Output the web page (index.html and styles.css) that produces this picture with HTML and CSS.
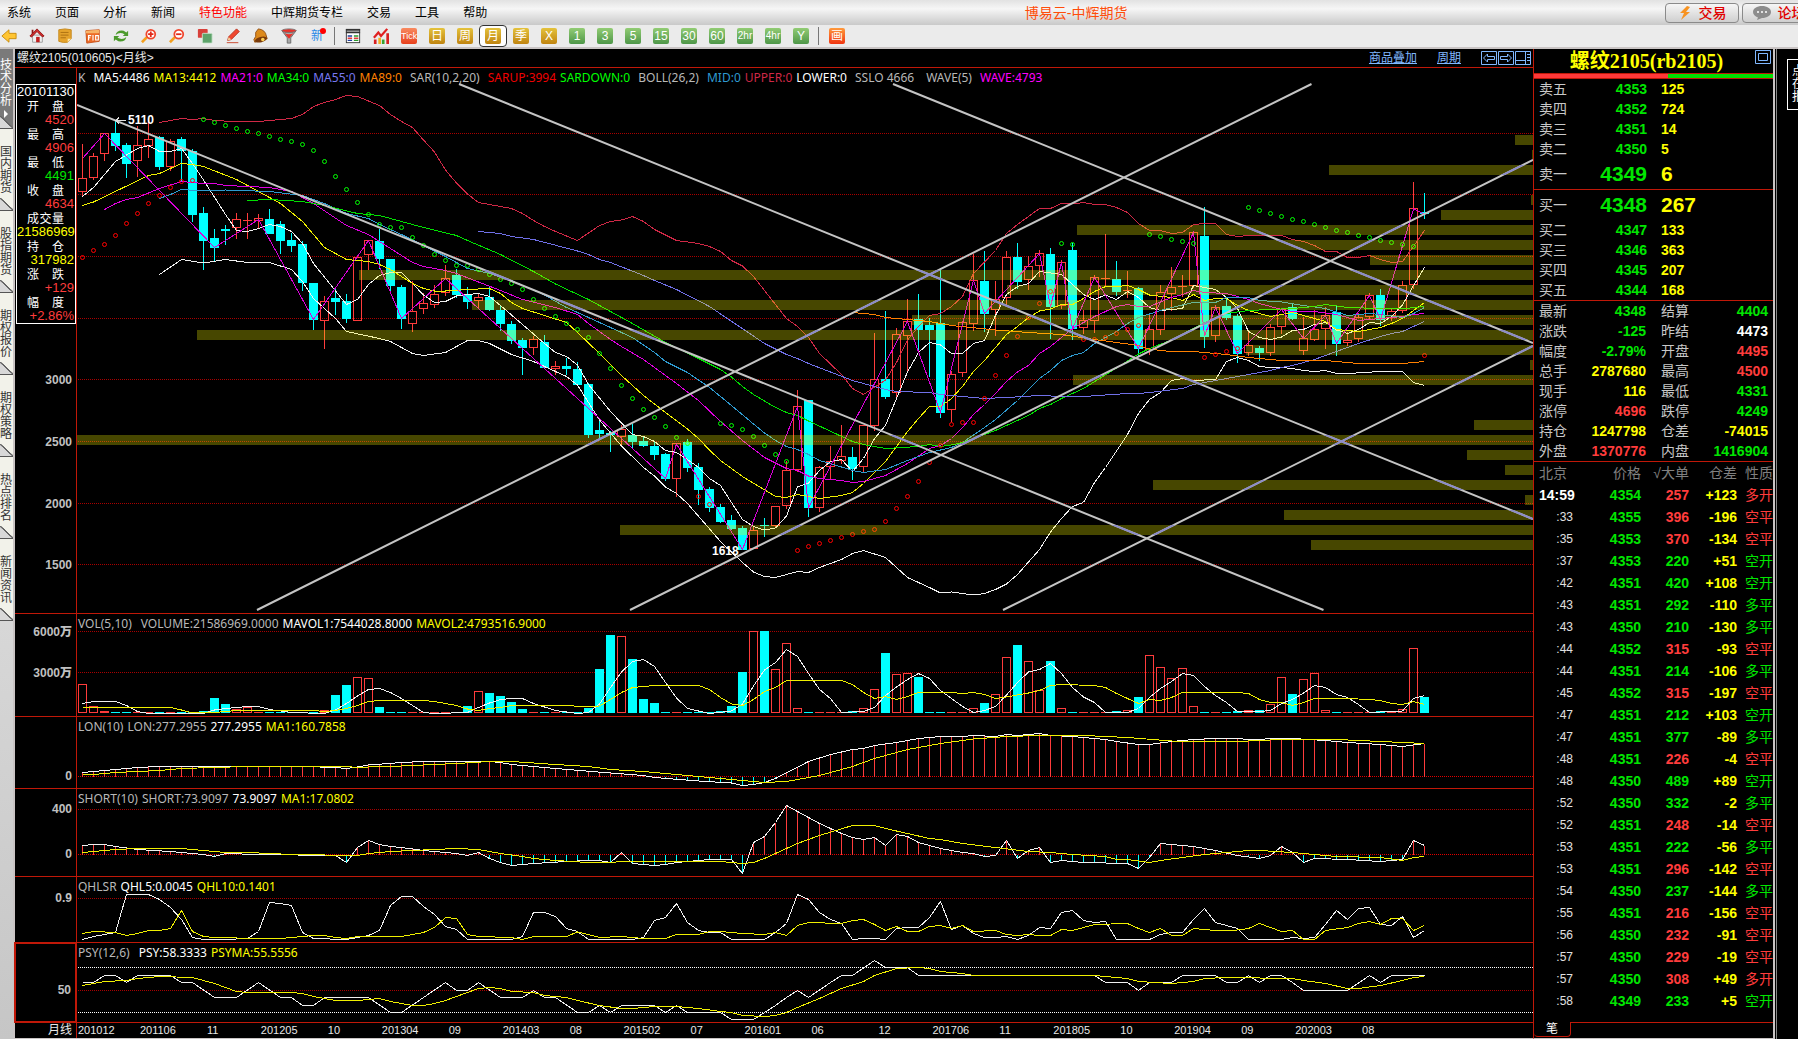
FILE: index.html
```html
<!DOCTYPE html>
<html lang="zh-CN">
<head>
<meta charset="utf-8">
<title>博易云-中辉期货</title>
<link rel="stylesheet" href="styles.css">
</head>
<body>
<div class="app">
  <header class="menubar">
    <nav class="menu">
      <a href="#">系统</a><a href="#">页面</a><a href="#">分析</a><a href="#">新闻</a><a href="#" class="hot">特色功能</a><a href="#">中辉期货专栏</a><a href="#">交易</a><a href="#">工具</a><a href="#">帮助</a>
    </nav>
    <h1 class="brand">博易云-中辉期货</h1>
    <div class="actions">
      <button class="action"><svg width="14" height="16" viewBox="0 0 14 16"><path d="M9 1 2 8h4l-3 7 9-8H8l4-5z" fill="#f79321"/></svg>交易</button>
      <button class="action"><svg width="18" height="14" viewBox="0 0 18 14"><path d="M9 0c5 0 9 2.500 9 6s-4 6-9 6l-5 2 1-2.500C2 10.500 0 8.500 0 6c0-3.500 4-6 9-6z" fill="#8c8c8c"/><circle cx="5" cy="6" r="1" fill="#fff"/><circle cx="9" cy="6" r="1" fill="#fff"/><circle cx="13" cy="6" r="1" fill="#fff"/></svg>论坛</button>
    </div>
  </header>

  <div class="toolbar">
    <button class="tool" aria-label="后退"><svg class="ico" viewBox="0 0 18 18"><path d="M1 9l8-7v4h8v6H9v4z" fill="#ffc533" stroke="#c78a0a"/></svg></button>
    <button class="tool" aria-label="主页"><svg class="ico" viewBox="0 0 18 18"><path d="M4 8h11v8H4z" fill="#f0f0f0" stroke="#999"/><path d="M1 9 9 1l8 8-2 1-6-6-6 6z" fill="#d22a2a" stroke="#8e1515"/><path d="M3 2h2v3L3 7z" fill="#8e1515"/><path d="M8 10h4v6H8z" fill="#c02020"/></svg></button>
    <button class="tool" aria-label="公告"><svg class="ico" viewBox="0 0 18 18"><path d="M2 2q7-2 14 0v10l-4 4q-5 1-10-1z" fill="#e5a32c" stroke="#c4861a"/><path d="M4 5h9M4 8h9M4 11h6" stroke="#a86c10"/><path d="M16 12l-4 4v-4z" fill="#fbe2a4"/></svg></button>
    <button class="tool" aria-label="基本资料"><svg class="ico" viewBox="0 0 18 18"><path d="M1 3l15-1v13l-14 2z" fill="#ed6a25" stroke="#c44a12"/><path d="M1 3l15-1v4H1z" fill="#f7b469"/><path d="M4 8v6M4 8.500h3M4 11h2M9 8v6M12 8.500h3v5h-3z" fill="none" stroke="#fff" stroke-width="1.300"/></svg></button>
    <button class="tool" aria-label="刷新"><svg class="ico" viewBox="0 0 18 18"><path d="M3 8q1-6 9-5l3 2 2-2v6h-6l2-2Q7 4 3 8zM15 10q-1 6-9 5l-3-2-2 2V9h6l-2 2q6 3 10-1z" fill="#4c9a2c"/></svg></button>
    <button class="tool" aria-label="放大"><svg class="ico" viewBox="0 0 18 18"><path d="M7 10l-6 6" stroke="#f4a020" stroke-width="3"/><circle cx="11" cy="7" r="5" fill="#fff" stroke="#f0452c" stroke-width="2"/><path d="M8 7h6M11 4v6" stroke="#e02818" stroke-width="2"/></svg></button>
    <button class="tool" aria-label="缩小"><svg class="ico" viewBox="0 0 18 18"><path d="M7 10l-6 6" stroke="#f4a020" stroke-width="3"/><circle cx="11" cy="7" r="5" fill="#fff" stroke="#f0452c" stroke-width="2"/><path d="M8 7h6" stroke="#e02818" stroke-width="2"/></svg></button>
    <button class="tool" aria-label="叠加"><svg class="ico" viewBox="0 0 18 18"><rect x="1" y="1" width="11" height="10" rx="1" fill="#d8403a"/><rect x="6" y="6" width="11" height="11" rx="1" fill="#5da36a" stroke="#cfe6d2"/></svg></button>
    <button class="tool" aria-label="画线"><svg class="ico" viewBox="0 0 18 18"><path d="M13 1l3 3-9 9-4 1 1-4z" fill="#f0472f" stroke="#b52a18"/><path d="M4 10l3 3-4 1z" fill="#f4cf9a"/><path d="M2 16.500h13" stroke="#c63a20" stroke-width="1"/></svg></button>
    <button class="tool" aria-label="预警"><svg class="ico" viewBox="0 0 18 18"><path d="M6 1q8 1 9 8l1 3L2 16 1 13q3-3 2-8z" fill="#dd8a1c" stroke="#8e4a0c"/><ellipse cx="9" cy="13" rx="7" ry="3" transform="rotate(-14 9 13)" fill="#7a3a0a"/><circle cx="11" cy="13" r="2" fill="#ffd35a"/></svg></button>
    <button class="tool" aria-label="筛选"><svg class="ico" viewBox="0 0 18 18"><path d="M1 3q8 4 16 0l-6 8v6H7v-6z" fill="#a8a8a8" stroke="#666"/><ellipse cx="9" cy="3" rx="8" ry="2" fill="#e83028" stroke="#777"/><path d="M4 6q5 2 10 0l-5 6z" fill="#e83028"/></svg></button>
    <button class="tool"><span class="fresh">新</span></button>
    <i class="sep"></i>
    <button class="tool" aria-label="报价"><svg class="ico" viewBox="0 0 18 18"><rect x="1.500" y="1.500" width="15" height="15" fill="#fff" stroke="#333"/><path d="M1 1h16v2H1zM1 4h16v2H1z" fill="#333"/><path d="M3 9h5M3 14h5" stroke="#1c3c9c" stroke-width="1.500"/><path d="M3 11.500h5" stroke="#e02020" stroke-width="1.500"/><path d="M10 9h5M10 14h5" stroke="#2a9a2a" stroke-width="1.500"/><path d="M10 11.500h5" stroke="#e02020" stroke-width="1.500"/></svg></button>
    <button class="tool" aria-label="分时"><svg class="ico" viewBox="0 0 18 18"><path d="M1 13h3v5H1zM15 6h3v12h-3z" fill="#d82020"/><path d="M6 11h3v7H6z" fill="#f0b020"/><path d="M10 13h3v5h-3z" fill="#38a030"/><path d="M1 11l5-6 3 4 7-8" fill="none" stroke="#e02020" stroke-width="2.500"/></svg></button>
    <button class="tool"><span class="key tick">Tick</span></button>
    <button class="tool"><span class="key gold">日</span></button>
    <button class="tool"><span class="key gold">周</span></button>
    <button class="tool on" aria-pressed="true"><span class="key gold">月</span></button>
    <button class="tool"><span class="key gold">季</span></button>
    <button class="tool"><span class="key gold">X</span></button>
    <button class="tool"><span class="key green">1</span></button>
    <button class="tool"><span class="key green">3</span></button>
    <button class="tool"><span class="key green">5</span></button>
    <button class="tool"><span class="key green">15</span></button>
    <button class="tool"><span class="key green">30</span></button>
    <button class="tool"><span class="key green">60</span></button>
    <button class="tool"><span class="key green slim">2hr</span></button>
    <button class="tool"><span class="key green slim">4hr</span></button>
    <button class="tool"><span class="key green">Y</span></button>
    <i class="sep"></i>
    <button class="tool"><span class="key fire">画</span></button>
  </div>

  <div class="desk">
    <nav class="tabs">
      <button class="tab current">技术分析<i class="play"></i></button>
      <button class="tab">国内期货</button>
      <button class="tab">股指期货</button>
      <button class="tab">期权报价</button>
      <button class="tab">期权策略</button>
      <button class="tab">热点排名</button>
      <button class="tab">新闻资讯</button>
    </nav>

    <main class="charts">
      <div class="caption">
        <h2>螺纹2105(010605)&lt;月线&gt;</h2>
        <a href="#" class="overlay">商品叠加</a>
        <a href="#" class="period">周期</a>
        <button class="mini" aria-label="左移"><svg viewBox="0 0 16 14"><path d="M.5.5h15v13H.5zM2.500 7l4-4v2.500h7v3h-7V11z"/></svg></button>
        <button class="mini" aria-label="右移"><svg viewBox="0 0 16 14"><path d="M.5.5h15v13H.5zM13.500 7l-4-4v2.500h-7v3h7V11z"/></svg></button>
        <button class="mini" aria-label="布局"><svg viewBox="0 0 16 14"><path d="M.5.5h15v13H.5zM10.500 0v14M0 9.500h10M12 3.500h3M12 6.500h3M12 9.500h3"/></svg></button>
      </div>

      <section class="pane main" id="pane-k">
        <div class="scale">
          <dl class="databox">
            <dt class="date">20101130</dt>
            <dt>开盘</dt><dd class="r">4520</dd>
            <dt>最高</dt><dd class="r">4906</dd>
            <dt>最低</dt><dd class="g">4491</dd>
            <dt>收盘</dt><dd class="r">4634</dd>
            <dt>成交量</dt><dd class="y">21586969</dd>
            <dt>持仓</dt><dd class="y">317982</dd>
            <dt>涨跌</dt><dd class="r">+129</dd>
            <dt>幅度</dt><dd class="r">+2.86%</dd>
          </dl>
        </div>
        <div class="plot">
          <svg preserveAspectRatio="none"></svg>
          <p class="legend"><span class="name">K</span><span class="w">MA5:4486</span><span class="y">MA13:4412</span><span class="m">MA21:0</span><span class="lime">MA34:0</span><span class="violet">MA55:0</span><span class="o">MA89:0</span><span class="name">SAR(10,2,20)</span><span class="red">SARUP:3994</span><span class="lime">SARDOWN:0</span><span class="name">BOLL(26,2)</span><span class="blue">MID:0</span><span class="rose">UPPER:0</span><span class="w">LOWER:0</span><span class="name">SSLO 4666</span><span class="name">WAVE(5)</span><span class="m">WAVE:4793</span></p>
        </div>
      </section>
      <section class="pane vol" id="pane-vol">
        <div class="scale"></div>
        <div class="plot"><svg preserveAspectRatio="none"></svg><p class="legend"><span class="pair">VOL(5,10)</span><span>VOLUME:21586969.0000</span><span class="w">MAVOL1:7544028.8000</span><span class="y">MAVOL2:4793516.9000</span></p></div>
      </section>
      <section class="pane lon" id="pane-lon">
        <div class="scale"></div>
        <div class="plot"><svg preserveAspectRatio="none"></svg><p class="legend"><span>LON(10)</span><span>LON:277.2955</span><span class="w">277.2955</span><span class="y">MA1:160.7858</span></p></div>
      </section>
      <section class="pane short" id="pane-short">
        <div class="scale"></div>
        <div class="plot"><svg preserveAspectRatio="none"></svg><p class="legend"><span>SHORT(10)</span><span>SHORT:73.9097</span><span class="w">73.9097</span><span class="y">MA1:17.0802</span></p></div>
      </section>
      <section class="pane qhl" id="pane-qhl">
        <div class="scale"></div>
        <div class="plot"><svg preserveAspectRatio="none"></svg><p class="legend"><span>QHLSR</span><span class="w">QHL5:0.0045</span><span class="y">QHL10:0.1401</span></p></div>
      </section>
      <section class="pane psy" id="pane-psy">
        <div class="scale focus"></div>
        <div class="plot"><svg preserveAspectRatio="none"></svg><p class="legend"><span class="pair">PSY(12,6)</span><span class="w">PSY:58.3333</span><span class="y">PSYMA:55.5556</span></p></div>
      </section>
      <div class="timeline">
        <div class="unit">月线</div>
        <div class="dates"><span>201012</span><span>201106</span><span>11</span><span>201205</span><span>10</span><span>201304</span><span>09</span><span>201403</span><span>08</span><span>201502</span><span>07</span><span>201601</span><span>06</span><span>12</span><span>201706</span><span>11</span><span>201805</span><span>10</span><span>201904</span><span>09</span><span>202003</span><span>08</span></div>
      </div>
    </main>

    <aside class="quote">
      <div class="symbol"><h2>螺纹2105(rb2105)</h2><button class="mini max" aria-label="最大化"><svg viewBox="0 0 16 14"><path d="M.5.5h15v13H.5zM3.500 3.500h9v7h-9z"/></svg></button></div>
      <div class="ratio"><i></i></div>
      <table class="depth" id="asks"></table>
      <table class="depth bids" id="bids"></table>
      <table class="stats" id="stats"></table>
      <table class="ticks">
        <thead><tr><th>北京</th><th>价格</th><th>√大单</th><th>仓差</th><th>性质</th></tr></thead>
        <tbody id="ticks"></tbody>
      </table>
      <div class="foot"><button class="sheet">笔</button></div>
    </aside>
    <div class="edge"><div class="note">点在报</div></div>
  </div>
</div>
<script src="chart.js"></script>
</body>
</html>
```
FILE: styles.css
```css
* { box-sizing: border-box; margin: 0; padding: 0; }
html, body { height: 100%; overflow: hidden; }
body { font: 12px/16px "Liberation Sans", "Noto Sans CJK SC", sans-serif; background: #000; color: #c8c8c8; }
button { border: 0; background: none; font: inherit; color: inherit; }
a { color: inherit; text-decoration: none; }
h1, h2 { font-weight: normal; }
i { font-style: normal; }
table { border-collapse: separate; border-spacing: 0; width: 100%; table-layout: fixed; }

.r { color: #ff3c3c; }
.g { color: #00e600; }
.y { color: #ff0; }
.w { color: #fff; }
.m { color: #f0f; }
.o { color: #ff8000; }
.red { color: #f00000; }
.lime { color: #0f0; }
.violet { color: #7878f0; }
.blue { color: #2e9ad0; }
.rose { color: #d02846; }

.app { display: flex; flex-direction: column; height: 100vh; min-height: 700px; }

.menubar { display: flex; align-items: center; flex: none; height: 25px; padding-left: 7px; background: linear-gradient(#e2e2e2, #f6f6f6 35%, #c9c9c9); color: #000; }
.menu { display: flex; gap: 24px; }
.menu .hot { color: #f00; }
.brand { flex: 1; text-align: center; font-size: 14px; color: #ff4d0a; }
.actions { display: flex; gap: 3px; margin-right: -18px; }
.action { display: flex; align-items: center; justify-content: center; gap: 7px; width: 74px; height: 20px; border: 1px solid #8a8a8a; border-radius: 4px; background: linear-gradient(#f6f6f6, #cfcfcf); color: #e00000; font-size: 14px; font-weight: 500; }

.toolbar { display: flex; align-items: center; flex: none; height: 24px; margin-left: -5px; background: #ebebeb; border-bottom: 2px solid #c9c4c4; }
.tool { display: flex; align-items: center; justify-content: center; flex: none; width: 28px; height: 22px; }
.tool.on { border: 1px solid #333; border-radius: 4px; background: #fff; }
.ico { width: 16px; height: 16px; }
.sep { flex: none; width: 1px; height: 18px; margin: 0 4px 0 3px; background: #777; }
.fresh { position: relative; color: #2a8ae8; }
.fresh::after { content: ""; position: absolute; top: 0; right: -3px; width: 6px; height: 6px; border-radius: 50%; background: #f00; }
.key { width: 16px; height: 16px; border-radius: 2px; color: #fff; text-align: center; line-height: 16px; white-space: nowrap; }
.gold { background: linear-gradient(#e4c23c, #c08410); }
.green { background: linear-gradient(#92cc74, #4e9648); }
.tick { background: linear-gradient(#f88a60, #e8401c); font-size: 9px; }
.fire { background: linear-gradient(#ff9a3c, #f03410); }
.slim { font-size: 10px; }

.desk { display: flex; flex: 1; min-height: 0; }

.tabs { display: flex; flex-direction: column; flex: none; width: 15px; background: linear-gradient(#b8b8b8 490px, #dadada 500px, #c6c6c6); border-right: 2px solid #c9c4c4; }
.tab { flex: none; width: 13px; height: 82px; padding-right: 1px; font-size: 12px; line-height: 12px; white-space: normal; word-break: break-all; color: #333; background: linear-gradient(to top right, #d8d8d8 45%, #666 47%, #666 53%, transparent 55%) bottom / 100% 12px no-repeat, #f2f2ea; border-bottom: 1px solid #555; }
.tab.current { height: 80px; color: #fff; background-color: #7a7a7a; }
.play { display: block; width: 0; margin: 3px 0 0 4px; border: 4px solid transparent; border-left-color: #fff; border-right: 0; }

.charts { display: flex; flex-direction: column; flex: 1; min-width: 0; border-bottom: 1px solid #c9c4c4; }
.caption { display: flex; align-items: center; flex: none; height: 19px; padding: 0 1px 1px 2px; border-bottom: 1px solid #c01808; color: #e8e8e8; }
.caption h2 { flex: 1; font-size: 12px; }
.caption a { color: #80b8ff; text-decoration: underline; }
.overlay { margin-right: 20px; }
.period { margin-right: 20px; }
.mini { width: 17px; height: 14px; }
.mini svg { display: block; width: 16px; height: 14px; fill: none; stroke: #80b8ff; }

.pane { display: grid; grid-template-columns: 61px 1fr; min-height: 0; border-bottom: 1px solid #c01808; }
.main { flex: 545 1 0; }
.vol { flex: 102 1 0; }
.lon { flex: 71 1 0; }
.short { flex: 87 1 0; }
.qhl { flex: 65 1 0; }
.psy { flex: 79 1 0; }
.scale { position: relative; font-weight: bold; color: #c0c0c0; }
.scale b { position: absolute; right: 4px; transform: translateY(-50%); }
.focus { outline: 1px solid #c01808; border: 1px solid #c01808; }
.plot { position: relative; min-width: 0; min-height: 0; border-left: 1px solid #c01808; overflow: hidden; }
.plot svg { position: absolute; width: 100%; height: 100%; shape-rendering: crispEdges; }
.plot b { position: absolute; color: #fff; transform: translateY(-50%); }
.legend { position: absolute; top: 2px; left: 1px; display: flex; gap: 4px; font: 12px/16px "Noto Sans", sans-serif; color: #b8b8b8; white-space: nowrap; }
.legend .name:not(:first-child) { margin: 0 4px; }
.legend .name:first-child { margin-right: 4px; }
.legend .pair { margin-right: 5px; }

.databox { margin: 16px 0 0 1px; padding-right: 1px; height: 240px; border: 1px solid #fff; font-weight: normal; color: #fff; }
.databox dt { height: 16px; line-height: 16px; padding: 0 10px; text-align: justify; text-align-last: justify; }
.databox dd { height: 12px; line-height: 10px; font-size: 13px; text-align: right; }
.databox .date { height: 14px; line-height: 14px; padding: 0; font-size: 13px; text-align-last: left; }

.timeline { display: grid; grid-template-columns: 61px 1fr; flex: none; height: 15px; line-height: 14px; color: #e8e8e8; }
.unit { padding-right: 4px; text-align: right; }
.dates { display: grid; grid-template-columns: 62fr 67fr 54fr 67fr 54fr 67fr 54fr 67fr 54fr 67fr 54fr 67fr 67fr 54fr 67fr 54fr 67fr 54fr 67fr 54fr 67fr 171fr; padding-left: 1px; border-left: 1px solid #c01808; font-size: 11px; }

.quote { display: flex; flex-direction: column; flex: none; width: 242px; border-left: 1px solid #c01808; border-right: 2px solid #c9c4c4; border-bottom: 1px solid #c9c4c4; font-size: 14px; }
.symbol { position: relative; flex: none; height: 24px; text-align: center; color: #ff0; }
.symbol h2 { font: bold 20px/24px "Liberation Serif", "Noto Sans CJK SC", serif; padding-right: 14px; }
.max { position: absolute; top: 1px; right: 1px; }
.ratio { flex: none; height: 6px; border: 1px solid #c01808; border-width: 1px 0; background: #00e000; }
.ratio i { display: block; width: 56%; height: 100%; background: #ff3838; }
.quote td, .quote th { font-weight: normal; white-space: nowrap; }
.quote td.n { font-weight: bold; text-align: right; }
.depth { flex: none; border-bottom: 1px solid #c01808; }
.depth tr { height: 20px; }
.depth th, .stats th { width: 60px; padding-left: 5px; text-align: left; }
.depth td.n:nth-child(2) { width: 53px; }
.depth td.n:last-child { padding-left: 14px; text-align: left; }
.depth .best { height: 30px; }
.depth .best td { font-size: 21px; }
.stats { flex: none; border-bottom: 1px solid #c01808; }
.stats tr { height: 20px; }
.stats th { width: 40px; }
.stats th + td { width: 72px; }
.stats td + th { width: 54px; padding-left: 15px; }
.stats td:last-child { width: auto; padding-right: 5px; }
.ticks { flex: none; }
.ticks tr { height: 22px; }
.ticks thead th { width: 41px; text-align: right; color: #808080; }
.ticks thead th:first-child { width: 59px; padding-left: 5px; text-align: left; }
.ticks thead th:nth-child(2), .ticks thead th:nth-child(3), .ticks thead th:nth-child(4) { width: 48px; }
.ticks thead th:last-child { width: auto; }
.ticks td:first-child { padding-right: 20px; text-align: right; font-size: 12px; color: #e0e0e0; }
.ticks tr:first-child td:first-child { padding: 0 0 0 5px; text-align: left; font-size: 14px; font-weight: bold; color: #fff; }
.ticks td:last-child { text-align: right; }
.foot { flex: none; margin-top: auto; height: 16px; border-top: 1px solid #c01808; }
.sheet { display: block; width: 37px; height: 15px; margin-top: -1px; line-height: 14px; font-size: 12px; background: #000; border: 1px solid #c01808; border-width: 0 1px 1px 0; border-radius: 0 0 4px 4px; color: #fff; }

.edge { flex: none; width: 22px; overflow: hidden; margin-left: 1px; border-left: 1px solid #888; }
.note { width: 40px; margin: 10px 0 0 10px; padding: 5px 20px 5px 4px; border: 1px solid #fff; line-height: 13px; word-break: break-all; color: #fff; }
```
FILE: chart.js
```js
const NS = 'http://www.w3.org/2000/svg';
const FIRST_X = 82.5, STEP = 11, LEFT = 77, WIDTH = 1456;
const RED = '#ff3c3c', CYAN = '#00ffff';

function add(parent, name, attrs) {
  const node = document.createElementNS(NS, name);
  for (const k in attrs) node.setAttribute(k, attrs[k]);
  parent.appendChild(node);
  return node;
}

/* Series are stored as blocks: each block has its own origin and scale. */
const BLOCKS = {
  a: [0, 40, 3, 3], b: [400, 200, 3, 3], c: [800, 180, 3, 3], d: [1150, 160, 3, 3],
  l: [0, 600, 2.063, 3], r: [740, 600, 1.96, 3]
};
const barX = i => FIRST_X + STEP * i;

function points(parts) {
  const out = [];
  for (const key in parts) {
    const [ox, oy, sx, sy] = BLOCKS[key];
    for (const p of parts[key].trim().split(/\s+/)) {
      const [x, y] = p.split(',').map(Number);
      let px = ox + x / sx;
      const near = barX(Math.round((px - FIRST_X) / STEP));
      if (Math.abs(near - px) < 3 || key === 'l' || key === 'r') px = near;
      out.push([px, Math.round((oy + y / sy) * 2) / 2]);
    }
  }
  return out.filter((p, i) => !i || p[0] > out[i - 1][0]);
}
function line(svg, stroke, pts) {
  add(svg, 'polyline', { points: pts.map(p => p.join()).join(' '), fill: 'none', stroke, 'stroke-width': 1 });
}
function valueAt(pts, x) {
  for (let i = 1; i < pts.length; i++) {
    const [x0, y0] = pts[i - 1], [x1, y1] = pts[i];
    if (x <= x1) return y0 + (y1 - y0) * (x - x0) / (x1 - x0);
  }
  return pts[pts.length - 1][1];
}
function pane(id, top, height, rules, labels) {
  const root = document.getElementById(id);
  const svg = root.querySelector('svg');
  svg.setAttribute('viewBox', `${LEFT} ${top} ${WIDTH} ${height}`);
  for (const [y, stroke] of rules)
    add(svg, 'line', { x1: LEFT + 1, x2: LEFT + WIDTH, y1: y, y2: y, stroke, 'stroke-dasharray': '1 1' });
  for (const [y, text] of labels) {
    const b = document.createElement('b');
    b.textContent = text;
    b.style.top = (y - top) / height * 100 + '%';
    root.querySelector('.scale').appendChild(b);
  }
  return svg;
}
const DIM = '#a80000';

/* ---- candles ---- */
const k = pane('pane-k', 68, 545,
  [133.5, 194.5, 256.5, 318.5, 379.5, 441.5, 503.5, 564.5].map(y => [y, DIM]),
  [[379.5, '3000'], [441.5, '2500'], [503.5, '2000'], [564.5, '1500']]);

/* colour, high, body top, body bottom, low */
const CANDLES = {
  a: `r312,415,457,468 r340,348,415,420 r279,279,343,362 c243,279,318,332 c310,315,372,413 r258,316,364,410
  r240,298,318,353 c288,292,381,390 r297,304,382,392 c292,296,332,425 c328,332,525,545 c501,519,603,690
  c567,594,624,665 c555,567,573,614 r519,538,563,597 r519,539,542,597 r521,535,544,566 c507,537,581,582
  c543,552,602,641 c579,600,617,635 c603,612,728,752 c729,729,840,870 r769,783,842,927 c745,774,785,825
  c762,783,837,849 r652,652,842,842 r600,600,644,690 c567,603,657,686 c657,657,738,752 c735,741,836,866`,
  b: `r243,334,371,395 r280,310,328,342 r255,283,314,323 r195,235,280,288 c207,225,285,293 c261,285,306,326
  r280,292,304,324 c261,292,330,332 c316,331,372,392 c364,372,423,432 c414,420,444,525 r408,418,443,465
  c405,426,503,503 r483,498,507,524 c473,498,507,525 c486,507,555,558 c549,552,705,713 c657,690,702,717
  c693,700,706,756 r675,687,712,740 c672,705,726,744 c710,723,738,741 c727,738,765,780 c759,762,837,843
  r730,730,838,891 c717,726,804,815 c789,801,870,915 c862,867,924,936 c912,921,966,969 c945,960,987,990
  c978,984,1050,1051 r980,989,1046,1046 c954,974,978,1011 r918,919,977,984 r783,811,919,927 r570,619,811,815
  c600,600,924,950`,
  c: `r858,862,983,995 r797,842,862,898 r735,829,844,852 c801,831,867,900 r735,736,862,875 r459,598,737,752
  c393,597,651,657 r445,463,640,657 r357,424,469,578 c342,417,450,512 c415,435,450,591 c264,430,699,714
  r573,583,691,725 r424,427,580,591 r222,301,433,453 c213,303,402,456 r304,358,391,468 r213,232,355,374
  c189,231,306,326 r228,259,301,330 r210,220,259,290 c204,222,381,477 r240,247,379,388 c190,210,447,480
  r390,421,445,461 r286,292,424,459 r162,295,298,320 c243,297,336,348 r273,330,334,354 c321,324,507,532
  r399,448,511,525 r315,337,451,465 r261,322,341,392 r286,318,321,351 r157,157,319,325`,
  d: `c141,228,531,564 r435,442,529,546 c410,438,474,480 c462,468,582,608 r516,556,580,588 c558,564,580,603
  r492,502,580,588 r446,448,502,521 c430,441,477,480 r471,535,574,585 r449,508,541,544 r442,466,508,567
  c435,456,552,588 r517,541,550,558 r460,472,538,546 r398,406,472,476 c387,405,480,498 r445,454,468,483
  r364,376,454,460 r66,145,376,388 c99,157,162,177`
};
let n = 0;
for (const key in CANDLES) {
  const oy = BLOCKS[key][1];
  for (const item of CANDLES[key].trim().split(/\s+/)) {
    const x = barX(n++), hollow = item[0] === 'r', stroke = hollow ? RED : CYAN;
    const [hi, t, b, lo] = item.slice(1).split(',').map(v => Math.round(oy + v / 3));
    if (hollow) {
      add(k, 'path', { d: `M${x} ${hi}V${t}M${x} ${b}V${lo}`, stroke });
      add(k, 'rect', { x: x - 4, y: t + .5, width: 8, height: Math.max(b - t - 1, 0.01), fill: 'none', stroke });
    } else {
      add(k, 'path', { d: `M${x} ${hi}V${lo}`, stroke });
      add(k, 'rect', { x: x - 4.5, y: t, width: 9, height: Math.max(b - t, 1), fill: CYAN });
    }
  }
}

/* ---- overlays on the price pane ---- */
const UPPER = {
  a: '478,247 544,235 577,238 610,236 643,241 700,244 775,244 874,235 907,223 940,200 973,187 1006,178 1039,166 1072,169 1138,196 1171,223 1204,244 1237,262',
  b: '70,-180 103,-144 136,-90 169,-51 202,-18 235,7 334,25 367,40 400,62 433,80 466,95 532,122 598,76 631,64 664,60 697,49 730,64 763,88 829,121 895,130 928,139 961,154 994,181 1027,198 1060,229 1159,355 1192,379 1225,412',
  c: '58,520 124,583 157,625 190,643 256,600 289,548 322,480 355,440 388,406 421,400 454,380 487,349 520,280 586,211 619,160 652,134 718,86 751,86 784,70 817,72 850,68 883,73 916,73 949,82 982,97 1015,130 1048,151',
  d: '31,211 64,220 97,217 130,193 163,190 196,190 229,223 262,229 295,226 394,226 427,238 460,244 493,257 526,274 559,274 592,292 625,292 658,286 691,298 724,307 757,304 790,260 823,211'
};
const LOWER = {
  a: '478,703 544,658 610,669 676,658 742,667 808,667 874,688 907,725 940,775 1006,835 1039,874 1138,895 1171,904 1204,922',
  b: '4,442 37,461 70,466 136,457 202,421 235,421 268,430 334,463 400,485 499,530 532,555 565,607 598,660 664,738 730,802 763,828 796,861 829,880 862,910 961,1024 1027,1088 1060,1116 1093,1129 1126,1132 1192,1114 1225,1117',
  c: '58,1162 124,1138 157,1120 190,1111 256,1132 289,1162 322,1192 388,1222 421,1239 454,1236 520,1245 553,1241 586,1228 619,1212 652,1184 718,1108 751,1056 784,1016 817,980 850,967 883,908 916,862 982,763 1015,700 1048,658',
  d: '31,697 64,661 97,655 130,661 196,658 229,604 262,592 295,601 328,619 361,622 394,622 427,626 460,631 493,634 526,631 559,640 592,640 691,634 757,634 790,667 823,677'
};
const MA5 = {
  a: '247,469 280,442 346,364 412,325 445,316 478,334 511,334 544,325 577,370 610,420 676,523 709,571 742,574 775,565 808,553 841,559 874,574 907,610 940,670 1039,793 1072,779 1105,734 1138,706 1171,697 1204,697',
  b: '37,250 70,285 103,307 136,304 169,288 202,283 235,281 268,289 301,316 433,430 466,457 499,470 532,495 565,553 631,634 697,703 730,710 763,724 796,751 829,757 862,778 895,802 928,835 961,856 1027,958 1060,980 1093,990 1126,984 1159,948 1192,861 1225,849',
  c: '58,872 91,845 124,838 157,875 190,835 223,775 256,736 289,655 322,576 355,517 388,487 421,495 454,520 487,520 520,490 553,481 586,406 619,343 652,319 685,310 718,274 784,283 817,313 850,343 883,358 916,345 949,358 982,335 1015,352 1048,382 1081,391 1147,385 1180,317',
  d: '163,382 196,388 229,412 262,445 295,514 328,532 361,538 394,531 427,512 460,508 493,493 526,487 559,510 592,520 625,508 658,487 691,490 724,470 757,435 790,376 823,322'
};
const MA13 = {
  a: '247,496 280,486 445,406 478,400 544,371 577,373 610,379 709,418 808,472 841,490 907,544 940,583 973,622 1039,658 1105,664 1138,673 1171,688 1204,709',
  b: '4,232 37,250 70,265 103,273 136,273 202,268 268,265 301,280 334,307 367,325 433,346 499,367 532,397 598,460 664,526 730,586 796,637 862,687 895,715 928,750 961,781 1027,829 1126,889 1159,892 1192,883 1225,889',
  c: '58,955 124,946 157,938 190,910 256,844 322,754 355,715 388,679 421,679 454,655 487,619 520,574 553,541 619,463 652,440 685,412 718,393 751,387 784,374 817,374 850,355 883,334 916,319 949,319 982,316 1015,328 1048,345',
  d: '64,412 97,421 130,403 163,421 196,415 229,415 262,436 295,451 361,470 427,457 493,475 526,485 559,508 592,512 625,514 691,502 724,490 757,476 790,451 823,427'
};
const MA21 = {
  a: '313,509 346,490 379,478 412,472 478,445 511,435 544,424 610,430 643,430 676,436 808,442 874,455 940,490 1039,556 1105,583 1204,646',
  b: '37,187 70,199 136,211 169,220 301,272 367,298 466,322 532,343 565,370 631,418 664,440 730,478 829,550 895,601 961,664 1027,721 1093,772 1159,805 1192,811 1225,828',
  c: '58,895 124,901 157,907 190,904 256,886 322,850 388,805 421,797 454,775 487,742 520,703 553,673 586,640 619,604 652,576 685,556 718,520 751,499 817,445 883,409 916,394 949,379 982,373 1015,379 1048,380',
  d: '64,412 97,403 130,391 163,397 229,400 295,418 328,430 394,448 427,454 493,455 559,463 592,472 625,481 691,475 757,469 790,463 823,460'
};
const MID = {
  a: '478,475 511,463 544,448 610,453 676,450 808,454 907,466 973,490 1039,520 1105,535 1138,553 1204,583',
  b: '37,120 136,169 202,205 268,220 334,241 433,285 499,322 532,337 631,382 697,412 763,457 796,485 829,501 862,517 928,562 994,616 1060,672 1093,699 1126,721 1159,739 1192,748 1225,764',
  c: '58,842 91,851 157,872 190,877 256,868 322,841 388,818 454,802 487,787 553,742 586,718 652,661 718,595 751,571 784,541 817,526 850,517 883,490 949,454 982,430 1015,412 1048,402',
  d: '31,451 64,442 130,427 196,427 229,413 295,412 328,422 394,426 460,437 526,445 592,466 658,460 691,463 757,472 790,460 823,443'
};
const MA34 = {
  a: '742,481 808,478 907,484 973,496 1072,520 1138,526 1204,544',
  b: '70,82 169,106 202,122 301,163 400,214 466,252 565,298 631,334 697,370 796,427 895,475 961,508 994,531 1027,559 1060,583 1126,622 1159,637 1192,646 1225,663',
  c: '157,784 190,793 256,805 355,800 388,793 421,799 454,795 487,787 586,751 685,706 718,685 751,673 784,655 850,625 949,564 1015,522 1048,505',
  d: '64,540 163,487 229,460 295,451 427,445 493,439 526,433 592,442 691,445 757,447 790,442 823,439'
};
const MA55 = {
  b: '235,94 301,100 334,109 400,118 532,153 565,163 598,178 631,187 730,226 763,241 829,268 928,319 1093,430 1159,463 1192,475 1225,490',
  c: '157,601 190,610 256,628 289,634 388,637 421,643 553,655 619,653 718,647 784,649 850,649 982,640 1015,640 1048,637',
  d: '97,685 130,673 262,649 361,631 394,622 427,616 493,598 559,574 625,550 691,529 724,520 757,514 823,484'
};
const MA89 = {
  c: '157,397 223,403 256,412 322,418 388,424 454,436 586,450 685,457 784,463 883,478 949,487 1015,496 1048,507',
  d: '31,571 64,574 130,574 229,583 295,592 394,601 526,601 625,610 757,610 823,604'
};
const WAVE = {
  a: '247,355 313,280 643,622 775,538 940,838 1105,601 1204,835',
  b: '136,235 796,835 829,732 1027,1048 1192,620 1225,922',
  c: '322,424 421,697 520,301 553,400 718,220 751,379 784,247 817,446 883,292 1015,505',
  d: '130,217 163,528 196,442 262,580 394,448 460,535 526,466 559,550 658,406 691,478 790,147 823,162'
};
line(k, '#d02846', points(UPPER));
line(k, '#f0f0f0', points(LOWER));
line(k, '#f0f0f0', points(MA5));
line(k, '#f0f000', points(MA13));
line(k, '#e000e0', points(MA21));
line(k, '#2e9ad0', points(MID));
line(k, '#00e000', points(MA34));
line(k, '#7070e8', points(MA55));
line(k, '#ff8000', points(MA89));
line(k, '#d800d8', points(WAVE));

function dots(stroke, parts) {
  for (const [cx, cy] of points(parts)) add(k, 'circle', { cx, cy, r: 2, fill: 'none', stroke, 'shape-rendering': 'auto' });
}
dots('#00ff00', {
  a: '610,238 643,247 676,256 709,265 742,274 775,280 808,289 841,298 874,304 907,313 940,331 973,364 1006,409 1039,448 1072,487 1105,523 1138,553 1171,562 1204,562',
  b: '37,112 70,136 103,163 136,181 169,196 202,197 235,208 268,223 301,238 334,250 367,268 400,298 433,325 466,349 499,370 532,388 565,412 598,460 631,505 664,556 697,595 730,628 763,652 796,679 829,712 862,730 961,670 994,676 1027,688 1060,709 1093,736 1126,763 1159,784',
  c: '784,190 817,193 1048,163 1081,169 1114,178 1147,184 1180,190',
  d: '295,142 328,151 361,160 394,169 427,178 460,184 493,193 526,202 559,211 592,217 625,226 658,232 691,241 724,247 757,253 790,259'
});
dots('#ff0000', {
  a: '247,652 280,631 313,613 346,586 379,550 412,520 445,490 478,466 511,442 544,424 577,421',
  b: '895,889 928,913 1192,1051',
  c: '25,1099 58,1090 91,1081 124,1072 157,1063 190,1054 223,1048 256,1024 289,985 322,949 355,904 388,847 421,796 454,733 487,727 520,727 553,655 586,586 619,526 652,469 685,412 718,370 751,334 850,478 883,478 916,472 949,460 982,448 1015,436',
  d: '163,592 196,583 229,574 262,565 823,586'
});

/* ---- price profile: y, left edge ---- */
const PROFILE = [[135, 1515], [150, 1532], [165, 1329], [195, 1531], [210, 1441], [225, 1077], [240, 1210], [255, 1370],
  [270, 359], [285, 1007], [300, 472], [315, 912], [330, 197], [345, 1246], [360, 1530], [375, 1073], [420, 1474],
  [435, 77], [450, 1467], [465, 1505], [480, 1153], [495, 1525], [510, 1284], [525, 620], [540, 1311]];
const clip = add(add(k, 'defs', {}), 'clipPath', { id: 'profile' });
for (const [y, x] of PROFILE) {
  const box = { x, y, width: LEFT + WIDTH - x, height: 10 };
  add(k, 'rect', { ...box, fill: '#ffff00', 'fill-opacity': .28 });
  add(clip, 'rect', box);
}

/* ---- trend channels ---- */
const CHANNELS = 'M77 105 1323.500 610M459 84 1533 519M893 84 1533 343M257 610 1311.500 84M630 610 1533 160M1003 610 1533 346';
add(k, 'path', { d: CHANNELS, stroke: '#c4c4c4', 'stroke-width': 2, 'shape-rendering': 'auto' });
add(k, 'path', { d: CHANNELS, stroke: '#8c8cc8', 'stroke-width': 2, 'shape-rendering': 'auto', 'clip-path': 'url(#profile)' });
add(k, 'path', { d: 'M116 120.500h10M119 117.500l-3 3 3 3', fill: 'none', stroke: '#e0e0e0' });
for (const [x, y, text] of [[128, 120, '5110'], [712, 551, '1618']]) {
  const b = document.createElement('b');
  b.textContent = text;
  b.style.left = (x - LEFT) / WIDTH * 100 + '%';
  b.style.top = (y - 68) / 545 * 100 + '%';
  k.parentNode.appendChild(b);
}

/* ---- volume ---- */
const vol = pane('pane-vol', 614, 102, [[631.5, DIM], [672.5, DIM]], [[632, '6000万'], [673, '3000万']]);
const VOLUMES = `r253 r317 r334 c337 c337 r337 r337 c337 r337 c337 c337 c333 c294 c312 r328 r320 r337 c337 c337 c337
c337 c337 r331 c285 c255 r232 r235 c321 c337 c337 r337 r337 r337 r337 c337 c318 r274 c279 c288 c306 c327 r337 c337
r337 c337 c337 c324 c207 c105 r109 c177 c297 c309 c337 r337 c337 c337 c337 c333 c318 c216 r94 c93 r208 r130 r325
c337 r337 r337 r337 c333 r325 r268 c159 r223 r220 c231 c337 c337 r337 r337 r325 c309 r283 r172 c135 r184 r271 c183
r325 c337 r337 r337 r337 c334 r331 c291 r166 r202 r235 r205 r319 c337 r337 c337 c334 r331 c331 r313 r232 c282 r238
r220 r331 c337 r337 r337 r337 c334 r334 r328 r145 c291`.split(/\s+/);
VOLUMES.forEach((v, i) => {
  const x = barX(i), y = Math.round(600 + v.slice(1) / 3), h = 713 - y;
  if (v[0] === 'c') add(vol, 'rect', { x: x - 4.5, y, width: 9, height: h, fill: CYAN });
  else add(vol, 'rect', { x: x - 4, y: y + .5, width: 8, height: Math.max(h - 1, .01), fill: 'none', stroke: RED });
});
line(vol, '#f0f0f0', points({
  l: '170,311 193,304 238,304 261,316 284,334 306,340 420,340 443,330 465,325 511,319 533,319 556,329 600,337 670,340 692,330 715,310 737,288 760,268 783,265 806,277 828,295 851,316 874,337 895,340 960,338 987,322 1010,309 1033,299 1055,295 1078,295 1101,310 1123,321 1146,331 1190,340 1214,337 1237,312 1260,262 1282,216 1305,184 1328,178 1350,199 1373,248 1396,294 1418,325 1440,333 1463,340 1508,333',
  r: '5,312 26,258 48,210 70,187 91,148 113,170 134,220 156,268 177,296 199,337 242,335 264,322 285,286 307,261 328,238 350,220 371,235 393,271 415,296 436,319 458,337 480,331 501,319 523,285 544,247 566,216 587,208 609,190 630,220 652,262 673,291 695,307 716,337 760,337 781,325 803,292 824,265 846,244 867,220 889,226 910,259 932,286 953,307 975,334 1018,334 1040,331 1062,310 1083,298 1105,279 1126,256 1148,262 1169,283 1191,292 1212,313 1234,337 1298,333 1320,295 1342,286'
}));
line(vol, '#f0f000', points({
  l: '170,322 350,322 375,330 397,339 443,337 488,331 648,331 670,334 692,332 715,325 737,316 760,304 783,301 874,301 897,304 942,316 964,327 987,331 1010,325 1033,322 1055,316 1169,316 1214,321 1237,318 1260,298 1282,277 1305,262 1350,256 1440,256 1463,268 1486,292 1508,312',
  r: '5,316 26,298 48,274 70,262 91,241 199,241 220,253 242,277 264,295 285,289 307,298 328,289 350,277 415,277 436,280 458,277 480,283 501,295 523,291 566,279 587,271 609,256 630,253 695,257 716,262 738,280 781,310 803,298 824,301 846,292 867,277 975,277 997,280 1018,298 1040,307 1062,307 1083,316 1105,307 1126,295 1212,297 1234,298 1255,301 1277,310 1298,313 1320,304 1342,313'
}));

function stems(svg, base, pts) {
  for (let i = 0; i < 123; i++) {
    const x = barX(i), y = valueAt(pts, x);
    add(svg, 'line', { x1: x, x2: x, y1: base, y2: y, stroke: y < base ? RED : CYAN });
  }
}

/* ---- LON ---- */
const lon = pane('pane-lon', 717, 71, [[776.5, '#e00000']], [[776, '0']]);
const LON = points({
  l: '170,517 215,511 284,503 328,499 620,499 690,502 715,505 737,501 760,495 828,487 874,484 1010,485 1033,488 1055,493 1146,505 1260,519 1328,526 1350,532 1440,543 1508,549',
  r: '5,556 26,553 48,547 70,535 134,484 177,463 220,448 242,445 264,436 307,427 350,415 393,409 436,409 458,406 501,409 523,403 544,406 587,400 609,406 652,409 716,418 738,424 781,433 803,433 846,424 889,419 932,415 975,415 997,418 1062,415 1083,415 1148,421 1191,427 1255,433 1298,439 1342,430'
});
stems(lon, 776.5, LON);
line(lon, '#f8f8f8', LON);
line(lon, '#f0f000', points({
  l: '170,523 193,523 238,517 328,511 375,505 511,499 715,499 737,502 783,499 828,498 897,493 942,490 1010,484 1055,485 1146,493 1214,499 1260,508 1328,514 1440,529 1508,538',
  r: '5,541 48,547 91,544 134,532 156,526 220,499 264,475 328,448 393,430 458,417 523,409 587,406 673,406 760,412 846,423 889,424 975,424 1062,418 1169,418 1255,424 1342,430'
}));

/* ---- SHORT ---- */
const short = pane('pane-short', 789, 87, [[809.5, DIM], [854.5, '#e00000']], [[809, '400'], [854, '0']]);
const SHORT = points({
  l: '170,737 193,733 215,733 238,739 284,748 350,754 420,763 443,769 465,761 533,763 692,766 715,787 737,743 760,721 783,733 806,739 828,742 874,751 942,760 964,766 987,757 1010,775 1033,787 1055,796 1101,790 1169,784 1214,781 1237,781 1260,787 1282,757 1305,790 1350,796 1373,793 1396,787 1463,778 1508,778',
  r: '5,820 26,728 48,709 70,667 91,617 156,670 199,700 220,712 242,718 264,712 285,736 307,703 328,709 350,727 393,745 436,757 458,760 480,769 501,767 523,721 544,776 566,751 587,742 609,787 630,781 673,787 760,790 781,805 803,772 824,730 889,739 932,751 975,766 1018,775 1040,766 1062,739 1083,757 1105,787 1126,775 1191,779 1255,784 1298,778 1320,721 1342,736'
});
stems(short, 854.5, SHORT);
line(short, '#f0f0f0', SHORT);
line(short, '#f0f000', points({
  l: '170,757 238,748 284,745 375,745 443,754 465,758 511,758 600,763 737,767 760,760 806,754 897,748 942,745 987,748 1010,754 1033,760 1078,769 1101,775 1146,781 1214,787 1260,787 1282,784 1486,784 1508,787',
  r: '5,790 26,787 48,775 113,730 156,706 220,676 264,676 285,685 328,700 371,715 393,718 436,730 501,742 566,754 609,757 652,763 716,769 738,778 760,778 803,788 824,781 867,772 910,763 997,751 1018,751 1083,758 1169,769 1255,772 1298,781 1320,772 1342,769'
}));

/* ---- QHLSR ---- */
const qhl = pane('pane-qhl', 877, 65, [[898.5, DIM]], [[898, '0.9']]);
line(qhl, '#f0f0f0', points({
  l: '170,1018 193,1009 238,997 261,883 306,883 328,898 350,922 375,958 397,1012 420,1018 465,1018 511,1015 533,994 556,907 579,910 601,916 624,997 647,1015 715,1018 760,1006 783,991 806,916 828,889 851,889 874,919 897,943 919,979 942,988 964,1018 1055,1018 1078,1009 1101,937 1123,937 1146,949 1169,985 1191,995 1214,1018 1305,1018 1328,1012 1350,961 1373,952 1396,910 1418,967 1440,991 1463,997 1486,997 1508,1018',
  r: '5,1018 48,1018 70,997 91,970 113,883 134,898 156,937 177,958 199,970 220,1018 242,1015 264,1015 285,1018 307,985 328,982 350,982 371,952 393,904 415,988 436,976 458,1000 480,1012 501,1012 523,1009 544,1018 566,1006 587,982 609,985 630,937 652,931 673,961 695,967 716,964 738,1018 803,1018 824,1003 846,997 867,997 889,958 910,925 932,967 975,985 997,1018 1062,1018 1083,1012 1105,1015 1126,1012 1148,973 1169,931 1191,958 1212,925 1234,922 1255,973 1277,976 1298,950 1320,1012 1342,991'
}));
line(qhl, '#f0f000', points({
  l: '170,1000 193,994 238,997 261,1006 284,1000 306,991 328,991 350,985 375,931 397,994 420,1009 443,1012 533,1015 579,1015 647,1006 670,1006 692,1012 715,1016 737,1009 828,1009 851,1003 874,997 897,982 919,952 942,955 964,1003 987,1009 1055,1012 1078,1018 1101,1009 1169,1009 1191,996 1214,1003 1237,1012 1282,1009 1328,1015 1373,1015 1396,1003 1440,1003 1463,994 1486,994 1508,997',
  r: '5,1000 48,1003 70,997 91,1006 113,976 134,967 199,970 220,961 242,958 264,973 285,991 307,979 328,994 350,994 371,979 393,976 415,985 436,977 458,994 501,991 523,1003 544,1006 566,1003 587,1006 609,1006 630,988 652,991 695,973 760,970 781,985 803,997 824,985 846,1006 867,1006 889,985 932,991 975,990 997,985 1018,970 1062,994 1083,991 1105,1018 1126,1018 1148,991 1191,982 1212,970 1234,964 1255,973 1277,955 1298,955 1320,991 1342,976'
}));

/* ---- PSY ---- */
const psy = pane('pane-psy', 943, 79, [[967.5, '#fff'], [990.5, DIM], [1012.5, '#fff']], [[990, '50']]);
line(psy, '#f0f0f0', points({
  l: '170,1148 193,1148 215,1127 238,1127 261,1147 284,1127 350,1127 375,1147 397,1147 443,1192 488,1192 533,1147 579,1192 601,1192 624,1216 647,1216 670,1192 760,1192 806,1238 828,1238 919,1147 942,1171 964,1171 987,1147 1033,1192 1078,1192 1101,1171 1123,1192 1146,1192 1191,1237 1214,1237 1237,1216 1260,1237 1282,1216 1350,1216 1373,1237 1396,1216 1418,1237 1486,1237 1508,1258',
  r: '5,1258 26,1258 70,1216 91,1192 113,1171 134,1192 177,1147 199,1126 220,1126 264,1081 285,1102 328,1102 350,1126 695,1126 716,1147 760,1147 781,1171 803,1147 846,1147 867,1126 932,1126 953,1147 975,1147 997,1126 1018,1147 1040,1126 1062,1126 1083,1147 1105,1171 1191,1171 1234,1126 1255,1147 1277,1126 1342,1126'
}));
line(psy, '#f0f000', points({
  l: '170,1156 215,1144 261,1141 284,1135 328,1129 397,1132 443,1151 488,1174 511,1177 601,1177 624,1180 647,1189 692,1201 737,1201 783,1195 806,1204 851,1216 874,1216 897,1210 919,1201 987,1165 1010,1162 1033,1165 1055,1174 1101,1177 1123,1186 1169,1192 1191,1201 1237,1216 1282,1225 1305,1225 1350,1220 1396,1219 1440,1225 1486,1234 1508,1238',
  r: '5,1246 48,1249 70,1246 91,1237 113,1222 156,1195 199,1165 242,1144 264,1126 307,1105 350,1102 371,1105 393,1114 436,1120 458,1126 695,1126 760,1135 781,1144 846,1150 889,1144 910,1135 953,1132 1083,1135 1105,1141 1148,1150 1191,1165 1212,1165 1255,1156 1298,1141 1320,1132 1342,1129'
}));

/* ---- quote tables ---- */
const fill = (id, html) => { document.getElementById(id).innerHTML = html.join(''); };
const depthRow = ([name, price, qty, best]) =>
  `<tr class="${best ? 'best' : ''}"><th>${name}</th><td class="n g">${price}</td><td class="n y">${qty}</td></tr>`;
fill('asks', [['卖五', 4353, 125], ['卖四', 4352, 724], ['卖三', 4351, 14], ['卖二', 4350, 5], ['卖一', 4349, 6, 1]].map(depthRow));
fill('bids', [['买一', 4348, 267, 1], ['买二', 4347, 133], ['买三', 4346, 363], ['买四', 4345, 207], ['买五', 4344, 168]].map(depthRow));
fill('stats', [
  ['最新', 'g', '4348', '结算', 'g', '4404'], ['涨跌', 'g', '-125', '昨结', 'w', '4473'],
  ['幅度', 'g', '-2.79%', '开盘', 'r', '4495'], ['总手', 'y', '2787680', '最高', 'r', '4500'],
  ['现手', 'y', '116', '最低', 'g', '4331'], ['涨停', 'r', '4696', '跌停', 'g', '4249'],
  ['持仓', 'y', '1247798', '仓差', 'y', '-74015'], ['外盘', 'r', '1370776', '内盘', 'g', '1416904']
].map(([a, ca, va, b, cb, vb]) =>
  `<tr><th>${a}</th><td class="n ${ca}">${va}</td><th>${b}</th><td class="n ${cb}">${vb}</td></tr>`));
fill('ticks', `14:59 4354 257 r +123 多开|:33 4355 396 r -196 空平|:35 4353 370 r -134 空平|:37 4353 220 g +51 空开
|:42 4351 420 g +108 空开|:43 4351 292 g -110 多平|:43 4350 210 g -130 多平|:44 4352 315 r -93 空平
|:44 4351 214 g -106 多平|:45 4352 315 r -197 空平|:47 4351 212 g +103 空开|:47 4351 377 g -89 多平
|:48 4351 226 r -4 空平|:48 4350 489 g +89 空开|:52 4350 332 g -2 多平|:52 4351 248 r -14 空平
|:53 4351 222 g -56 多平|:53 4351 296 r -142 空平|:54 4350 237 g -144 多平|:55 4351 216 r -156 空平
|:56 4350 232 r -91 空平|:57 4350 229 r -19 空平|:57 4350 308 r +49 多开|:58 4349 233 g +5 空开`
  .split('|').map(row => {
    const [time, price, qty, side, diff, kind] = row.trim().split(' ');
    return `<tr><td>${time}</td><td class="n g">${price}</td><td class="n ${side}">${qty}</td><td class="n y">${diff}</td><td class="${side}">${kind}</td></tr>`;
  }));
```
